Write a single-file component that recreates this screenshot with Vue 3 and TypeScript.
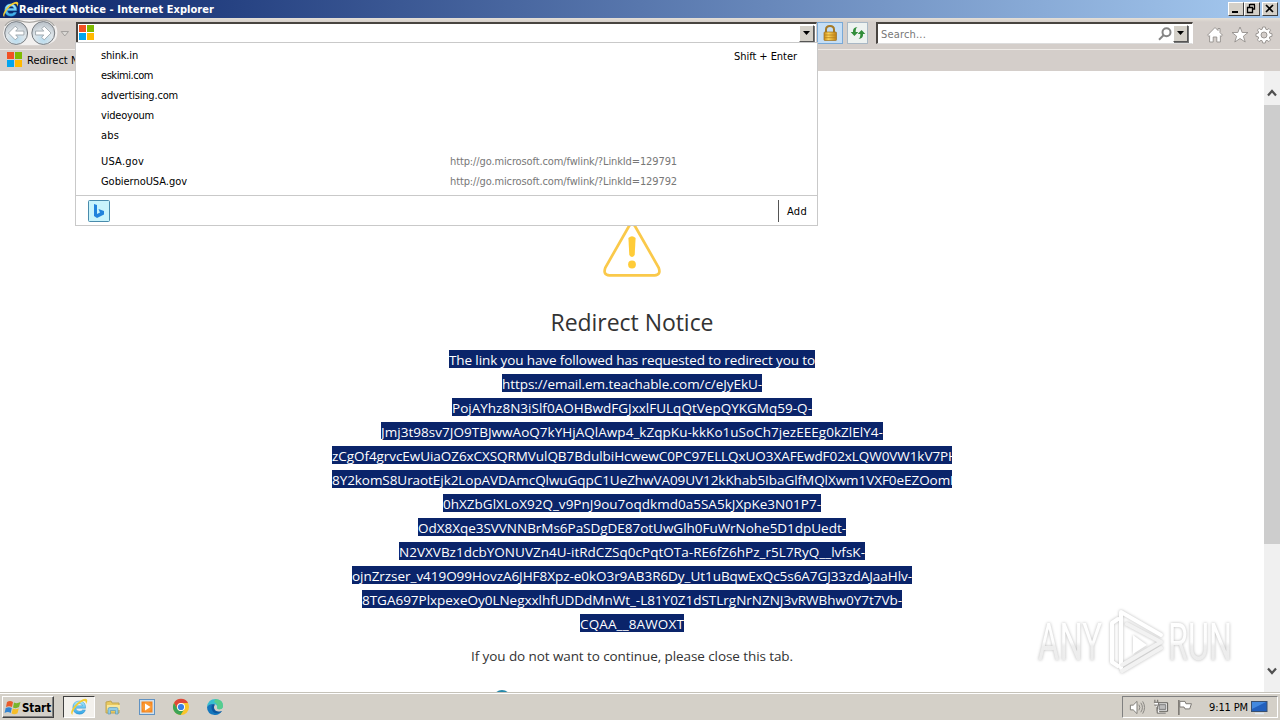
<script setup lang="ts">
import type { Directive } from 'vue'

interface Line { text: string; width: number }
interface Suggestion { name: string; width: number; url?: string; gap?: boolean }

// Spreads letters so that a text fills the given width in pixels.
const vFit: Directive<HTMLElement, number> = {
  mounted(el, { value }) {
    const count = (el.textContent ?? '').length
    el.style.letterSpacing = `${(value - el.getBoundingClientRect().width) / count}px`
  },
}

const suggestions: Suggestion[] = [
  { name: 'shink.in', width: 37 },
  { name: 'eskimi.com', width: 52 },
  { name: 'advertising.com', width: 77 },
  { name: 'videoyoum', width: 53 },
  { name: 'abs', width: 18 },
  { name: 'USA.gov', width: 43, url: 'http://go.microsoft.com/fwlink/?LinkId=129791', gap: true },
  { name: 'GobiernoUSA.gov', width: 86, url: 'http://go.microsoft.com/fwlink/?LinkId=129792' },
]

const lines: Line[] = [
  { text: 'The link you have followed has requested to redirect you to', width: 366 },
  { text: 'https://email.em.teachable.com/c/eJyEkU-', width: 260 },
  { text: 'PojAYhz8N3iSlf0AOHBwdFGJxxlFULqQtVepQYKGMq59-Q-', width: 360 },
  { text: 'Jmj3t98sv7JO9TBJwwAoQ7kYHjAQlAwp4_kZqpKu-kkKo1uSoCh7jezEEEg0kZlElY4-', width: 502 },
  { text: 'zCgOf4grvcEwUiaOZ6xCXSQRMVulQB7BdulbiHcwewC0PC97ELLQxUO3XAFEwdF02xLQW0VW1kV7PH', width: 626 },
  { text: '8Y2komS8UraotEjk2LopAVDAmcQlwuGqpC1UeZhwVA09UV12kKhab5IbaGlfMQlXwm1VXF0eEZOomH', width: 628 },
  { text: '0hXZbGlXLoX92Q_v9PnJ9ou7oqdkmd0a5SA5kJXpKe3N01P7-', width: 378 },
  { text: 'OdX8Xqe3SVVNNBrMs6PaSDgDE87otUwGlh0FuWrNohe5D1dpUedt-', width: 428 },
  { text: 'N2VXVBz1dcbYONUVZn4U-itRdCZSq0cPqtOTa-RE6fZ6hPz_r5L7RyQ__lvfsK-', width: 466 },
  { text: 'ojnZrzser_v419O99HovzA6JHF8Xpz-e0kO3r9AB3R6Dy_Ut1uBqwExQc5s6A7GJ33zdAJaaHlv-', width: 560 },
  { text: '8TGA697PlxpexeOy0LNegxxlhfUDDdMnWt_-L81Y0Z1dSTLrgNrNZNJ3vRWBhw0Y7t7Vb-', width: 540 },
  { text: 'CQAA__8AWOXT', width: 104 },
]
</script>

<template>
  <div class="screen">
    <svg class="defs" aria-hidden="true">
      <defs>
        <linearGradient id="blueE" x1="0" y1="0" x2="0" y2="1">
          <stop offset="0" stop-color="#a8ecff" /><stop offset="1" stop-color="#2fa4e6" />
        </linearGradient>
        <radialGradient id="round" cx=".5" cy=".8" r=".7">
          <stop offset="0" stop-color="#b9dcef" /><stop offset=".6" stop-color="#dfe6ea" /><stop offset="1" stop-color="#bfc7ce" />
        </radialGradient>
        <linearGradient id="lockBody" x1="0" y1="0" x2="1" y2="0">
          <stop offset="0" stop-color="#c98a16" /><stop offset=".35" stop-color="#fbd45a" /><stop offset="1" stop-color="#c07f10" />
        </linearGradient>
        <linearGradient id="fade" gradientUnits="userSpaceOnUse" x1="0" y1="18" x2="0" y2="58">
          <stop offset="0" stop-color="#fff" /><stop offset=".5" stop-color="#fdfdfd" /><stop offset=".6" stop-color="#eee" /><stop offset="1" stop-color="#ececec" />
        </linearGradient>
        <symbol id="ie" viewBox="0 0 18 18">
          <path fill-rule="evenodd" d="M15.6 10.2H5.8Q6 13.3 9.6 13.3Q11.8 13.3 12.5 11.9H15.4Q14 16.2 9.4 16.2Q3 15.8 2.8 9.5Q3 3.2 9.3 3Q16 3.4 15.6 10.2ZM5.9 7.8H12.5Q12.1 5.5 9.2 5.5Q6.4 5.6 5.9 7.8Z" fill="url(#blueE)" stroke="#1f7fc0" stroke-width=".4" />
          <path d="M2.6 17Q-1.2 15.2 4.8 7.6Q12.6-.5 16.4 1.1Q18.4 2.3 15.9 6.2Q16.5 2.3 13.2 3.2Q8.7 4.8 4.6 10.7Q1.8 15.1 2.6 17Z" fill="#f5cd31" />
        </symbol>
        <symbol id="ms" viewBox="0 0 15 15">
          <path d="M0 0H7V7H0Z" fill="#f25022" /><path d="M8 0H15V7H8Z" fill="#7fba00" />
          <path d="M0 8H7V15H0Z" fill="#00a4ef" /><path d="M8 8H15V15H8Z" fill="#ffb900" />
        </symbol>
      </defs>
    </svg>

    <header class="titlebar">
      <svg class="title-icon"><use href="#ie" /></svg>
      <span class="title"><span v-fit="195">Redirect Notice - Internet Explorer</span></span>
      <div class="controls">
        <span class="win"><svg viewBox="0 0 13 11"><path d="M3 9H9" stroke="#000" stroke-width="2" /></svg></span>
        <span class="win"><svg viewBox="0 0 13 11"><path d="M5 1.5H10M4.5 1V4M9.5 2V6H8M2 4.5H8M2.5 4V9.5H7.5V4" fill="none" stroke="#000" stroke-width="1.3" /></svg></span>
        <span class="win last"><svg viewBox="0 0 13 11"><path d="M3 2L10 9M10 2L3 9" stroke="#000" stroke-width="1.7" /></svg></span>
      </div>
    </header>

    <nav class="navbar">
      <svg class="travel" viewBox="0 0 74 32">
        <path d="M14 2H45Q58 4 58 15Q58 27 43 28H15Q2 26 2 15Q3 3 14 2Z" fill="#fff" opacity=".7" />
        <path d="M4 8Q10 0 20 3Q29 6 38 3Q49 0 55 8" fill="none" stroke="#aaa8a4" stroke-width="1.3" />
        <g fill="url(#round)" stroke="#74797e"><circle cx="15.5" cy="15.5" r="11.8" /><circle cx="43.5" cy="15.5" r="11.8" /></g>
        <g fill="#fff" stroke="#8f999f" stroke-width=".8">
          <path d="M7.5 15.5L14.5 8.5L17.3 11L15 13.5H23.5V17.5H15L17.3 20L14.5 22.5Z" />
          <path d="M51.5 15.5L44.5 8.5L41.7 11L44 13.5H35.5V17.5H44L41.7 20L44.5 22.5Z" />
        </g>
        <path d="M62 14H69.5L65.7 18.5Z" fill="#dedcd8" stroke="#999794" stroke-width=".9" />
      </svg>
      <div class="address">
        <svg class="site-icon"><use href="#ms" /></svg>
        <span class="drop"><svg viewBox="0 0 9 5"><path d="M1 0H8L4.5 4Z" /></svg></span>
      </div>
      <span class="tool lock">
        <svg viewBox="0 0 16 18"><path d="M4 9V5.5Q4 2 8 2Q12 2 12 5.5V9" fill="none" stroke="#a57a27" stroke-width="2" /><rect x="2" y="8" width="12.5" height="8.5" rx=".8" fill="url(#lockBody)" stroke="#9c7021" stroke-width=".7" /><path d="M2 11H14M2 13.7H14" stroke="#b68220" stroke-width=".8" /></svg>
      </span>
      <span class="tool refresh">
        <svg viewBox="0 0 16 16"><path d="M7.5 2Q5.5 3 5.7 7H8.3L4.4 11L.7 7H3Q2.5 2.5 7.5 2Z" fill="#318d3a" /><path d="M8.5 14Q10.5 13 10.3 9H7.7L11.6 5L15.3 9H13Q13.5 13.5 8.5 14Z" fill="#318d3a" /></svg>
      </span>
      <div class="search">
        <span class="hint"><span v-fit="45">Search...</span></span>
        <svg class="glass" viewBox="0 0 14 14"><circle cx="8.5" cy="5.3" r="4" /><path d="M5.5 8.2L1 12.8" /></svg>
        <span class="drop"><svg viewBox="0 0 9 5"><path d="M1 0H8L4.5 4Z" /></svg></span>
      </div>
      <div class="commands">
        <svg viewBox="0 0 18 18"><path d="M9 1.5L1.5 9.2L3 10.3L3.6 9.7V16H7.2V11H10.8V16H14.4V9.7L15 10.3L16.5 9.2L14 6.6V2.5H12V4.5Z" /></svg>
        <svg viewBox="0 0 18 18"><path d="M9 1L11.2 6.5H17L12.4 10.2L14.2 16L9 12.5L3.8 16L5.6 10.2L1 6.5H6.8Z" /></svg>
        <svg viewBox="0 0 18 18"><path fill-rule="evenodd" d="M7.7 1H10.3L10.8 3.2L12.1 3.8L14 2.5L15.6 4.1L14.3 6L14.8 7.2L17 7.7V10.3L14.8 10.8L14.3 12L15.6 13.9L13.9 15.6L12 14.3L10.8 14.8L10.3 17H7.7L7.2 14.8L6 14.3L4.1 15.6L2.4 13.9L3.7 12L3.2 10.8L1 10.3V7.7L3.2 7.2L3.7 6L2.4 4.1L4.1 2.4L6 3.7L7.2 3.2ZM9 6A3 3 0 1 0 9 12A3 3 0 1 0 9 6Z" /></svg>
      </div>
    </nav>

    <div class="tabs"><svg><use href="#ms" /></svg><span>Redirect Notice</span></div>

    <section class="viewport">
      <main class="page">
        <svg class="warning" viewBox="0 0 64 60">
          <path d="M28.8 6.5Q32 1.5 35.2 6.5L58.6 47.5Q61.4 54.8 54.6 55.3H9.4Q2.6 54.8 5.4 47.5Z" fill="none" stroke="#fac94a" stroke-width="2.7" />
          <path d="M28.4 18Q32 14.5 35.6 18L34.7 35Q32 39 29.3 35Z" fill="#ffcc38" /><circle cx="32" cy="44.5" r="3.9" fill="#ffcc38" />
        </svg>
        <h1><span v-fit="163">Redirect Notice</span></h1>
        <div class="message">
          <p v-for="line in lines" :key="line.text" :class="{ wide: line.width > 620 }"><span v-fit="line.width">{{ line.text }}</span></p>
        </div>
        <p class="note"><span v-fit="322">If you do not want to continue, please close this tab.</span></p>
        <i class="arc"></i>
      </main>
      <aside class="scrollbar">
        <svg viewBox="0 0 16 34"><path d="M4 24.5L8 20L12 24.5" /></svg>
        <div class="thumb"></div>
        <svg class="down" viewBox="0 0 16 34"><path d="M4 10.5L8 15L12 10.5" /></svg>
      </aside>
    </section>

    <footer class="taskbar">
      <button class="start">
        <svg viewBox="0 0 18 17"><path d="M3 3Q6 1 9 3L8 8Q5 6.5 2 8Z" fill="#e95b2b" /><path d="M10 3.5Q13 5 16.5 3L15 8Q12 10 9 8.5Z" fill="#78b52d" /><path d="M1.7 9Q5 7.5 7.8 9L6.7 14Q3.8 12 .6 14Z" fill="#3384d2" /><path d="M8.8 9.5Q12 11 14.8 9.3L13.5 14.3Q10.5 16 7.6 14.5Z" fill="#f6bd27" /></svg>
        <span v-fit="29">Start</span>
      </button>
      <span class="task active"><svg><use href="#ie" /></svg></span>
      <span class="task"><svg viewBox="0 0 18 18"><path d="M2 4L7 3L8 5H15V15H2Z" fill="#e9c95e" stroke="#bfa553" /><path d="M3 7H16V12H3Z" fill="#f9e79b" /><path d="M4 16V11Q4 9.5 6 9.5H12.5Q14 9.5 14 11V16H11.5V12.5H6.5V16Z" fill="#91cce5" stroke="#5f9bb9" stroke-width=".7" /></svg></span>
      <span class="task"><svg viewBox="0 0 18 18"><rect x="1.5" y="1.5" width="15" height="15" fill="#cfe0ee" stroke="#6092c2" /><rect x="3.5" y="3.5" width="11" height="11" fill="#f5861f" /><circle cx="9" cy="9" r="5" fill="#fa9833" /><path d="M7 5.5L12.5 9L7 12.5Z" fill="#fff" /></svg></span>
      <span class="task"><svg viewBox="0 0 18 18"><circle cx="9" cy="9" r="8" fill="#fac52b" /><path d="M2 5A8 8 0 0 1 16 5H9A4 4 0 0 0 5.5 11Z" fill="#df473a" /><path d="M2 5A8 8 0 0 0 8.5 17L12.5 11A4 4 0 0 1 5.5 11Z" fill="#3ca457" /><circle cx="9" cy="9" r="4" fill="#fff" /><circle cx="9" cy="9" r="3.1" fill="#397fe6" /></svg></span>
      <span class="task"><svg viewBox="0 0 18 18"><path d="M1 9Q2 1 9.5 1Q17 1.5 17 8Q16.5 12 12 11Q10.5 10.5 11.3 9Q11 6 7 6Q3 6 1 9Z" fill="#38bfd0" /><path d="M9.5 1Q17 1.5 17 8Q16.5 12 12 11Q10.5 10.5 11.3 9Q12 6 8 4Z" fill="#57cd8d" /><path d="M1 9Q3 5.5 7 6Q4.5 12 10 14Q13 15 16 13Q13 17.5 8.5 17Q1 16 1 9Z" fill="#1577bd" /><path d="M7 6Q4.5 8 6 12Q8 16 12 15Q15 15 16 13Q9.5 15 8 10Q7.7 8 9 6.5Z" fill="#0b579f" /></svg></span>
      <div class="tray">
        <svg class="speaker" viewBox="0 0 18 18"><path d="M2 6.5H5L9 2.5V15.5L5 11.5H2Z" fill="#fff" stroke="#7b7974" /><path d="M11 6Q13 9 11 12M13 4Q16.5 9 13 14M15 2.5Q19 9 15 15.5" fill="none" stroke="#868480" /></svg>
        <svg class="network" viewBox="0 0 18 18"><path d="M5 4H16V13H5Z" fill="#eee" stroke="#55534f" /><path d="M7 6H14V11H7ZM8 15H14" fill="#bbb" stroke="#777" /><path d="M1.5 3.5H6.5V7L5 8.5V15H8M2.5 3V.8M5.5 3V.8M2 6.5H6" fill="#fff" stroke="#65625e" /></svg>
        <svg class="flag" viewBox="0 0 18 18"><path d="M2.5 1V17" stroke="#77746f" stroke-width="1.6" /><path d="M3.5 2.5H9L10 5H15.8L14 10.5H9L8 8.5H3.5Z" fill="#fff" stroke="#77746f" /></svg>
        <span class="clock"><span v-fit="39">9:11 PM</span></span>
        <svg class="desktop" viewBox="0 0 17 14"><rect x=".5" y=".5" width="15.5" height="10" fill="#2260bd" stroke="#39506f" /><path d="M1 1H15L1 8Z" fill="#4389df" /><path d="M4 12.5H13" stroke="#dce8f5" stroke-width="1.5" /></svg>
      </div>
    </footer>

    <div class="dropdown">
      <div class="list">
        <div v-for="s in suggestions" :key="s.name" class="row" :class="{ gap: s.gap }">
          <span class="name"><span v-fit="s.width">{{ s.name }}</span></span>
          <span v-if="s.url" class="url"><span v-fit="227">{{ s.url }}</span></span>
          <span v-if="s.name === 'shink.in'" class="keys"><span v-fit="63">Shift + Enter</span></span>
        </div>
      </div>
      <div class="actions">
        <svg viewBox="0 0 22 22"><rect x=".5" y=".5" width="21" height="21" rx="1" fill="#c8f4fc" stroke="#498bac" /><path d="M6 4L9 5V14L12 12.5L10.5 9L16 11V14.5L9 18L6 16Z" fill="#2183dc" /></svg>
        <span class="add"><span v-fit="20">Add</span></span>
      </div>
    </div>

    <svg class="watermark" viewBox="0 0 210 80">
      <g class="mark-text"><text x="8" y="56" textLength="64" lengthAdjust="spacingAndGlyphs">ANY</text><text x="138" y="56" textLength="64" lengthAdjust="spacingAndGlyphs">RUN</text></g>
      <g class="mark-shape"><path d="M88 15L82 19V58L88 62" /><path d="M103 31V50L117 41Z" class="core" /><path d="M91 64V8L131 31" /><path d="M97 20L131 38L92 61M131 44L92 67" class="low" /></g>
    </svg>
  </div>
</template>

<style>
html, body { overflow: hidden; }
</style>

<style scoped>
* { box-sizing: border-box; }
.screen { position: relative; width: 1280px; height: 720px; display: flex; flex-direction: column; overflow: hidden; background: #fff; color: #000; font: 11px/16px "DejaVu Sans Condensed", "DejaVu Sans", sans-serif; white-space: nowrap; }
.screen svg { display: block; flex: none; }
.screen .defs { position: absolute; width: 0; height: 0; }
.titlebar { height: 18px; flex: none; display: flex; align-items: center; padding: 0 2px; color: #fff; background: linear-gradient(90deg, #0a246a, #a6caf0); }
.title-icon { width: 17px; height: 17px; }
.title { flex: 1; font-weight: bold; padding-top: 1px; }
.controls { display: flex; }
.win { width: 16px; height: 14px; background: #d4d0c8; border: 1px solid; border-color: #fff #404040 #404040 #fff; }
.win svg { width: 13px; height: 11px; }
.win.last { margin-left: 2px; }
.navbar { height: 31px; flex: none; display: flex; background: linear-gradient(#e4dfd7 0, #d4ceca 4px); }
.travel { width: 74px; height: 31px; }
.address, .search { height: 22px; display: flex; align-items: center; background: #fff; border: 1px solid #808080; border-top: 2px solid #484440; border-left: 2px solid #484440; border-bottom: 1px solid #ddd; }
.address { width: 741px; margin: 4px 0 0 2px; padding-right: 2px; border-right-color: #d4ceca; }
.site-icon { width: 15px; height: 15px; margin: -2px 0 0 1px; }
.drop { width: 15px; height: 17px; display: grid; place-items: center; background: #d4d0c8; border: 1px solid; border-color: #fff #555 #555 #fff; box-shadow: 1px 1px #777; }
.drop svg { width: 9px; height: 5px; }
.address .drop { margin: -1px 0 0 auto; }
.tool { height: 22px; margin-top: 4px; display: grid; place-items: center; border: 1px solid #79a9d7; background: #c5def5; }
.lock { width: 26px; }
.lock svg { width: 16px; height: 18px; }
.refresh { width: 21px; margin-left: 4px; background: #edf2f0; border-color: #a9b8c5; }
.refresh svg { width: 16px; height: 16px; }
.search { width: 317px; margin: 4px 0 0 8px; padding-left: 3px; border-right-color: #fff; }
.hint { color: #777; flex: 1; padding-top: 2px; }
.glass { width: 14px; height: 14px; margin-right: 1px; fill: none; stroke: #858585; stroke-width: 2; }
.search .drop { margin: -1px 4px 0 0; }
.commands { display: flex; gap: 6.5px; padding: 8px 0 0 13px; }
.commands svg { width: 18px; height: 18px; fill: #fff; stroke: #94908c; stroke-width: .9; }
.tabs { height: 22px; flex: none; display: flex; align-items: center; padding-left: 7px; gap: 5px; background: #d4ceca; border-top: 1px solid #eeeae6; }
.tabs svg { width: 15px; height: 15px; margin-top: -2px; }
.tabs span { width: 100px; overflow: hidden; }
.viewport { height: 621px; flex: none; display: flex; }
.page { width: 1264px; display: flex; flex-direction: column; align-items: center; font-family: "Open Sans", "Noto Sans", sans-serif; color: #333; overflow: hidden; }
.page > * { flex: none; }
.warning { width: 64px; height: 60px; margin-top: 149px; }
.page h1 { margin: 24px 0 0; font-size: 23px; font-weight: 400; line-height: 36px; }
.page p { margin: 0; }
.message { width: 640px; margin-top: 7px; padding: 0 20px; overflow: hidden; color: #fff; font-size: 13.5px; line-height: 24px; text-align: center; }
.message p { height: 24px; display: flex; justify-content: center; align-items: center; }
.message p.wide { justify-content: flex-start; }
.message span { height: 18px; flex: none; background: #0a246a; line-height: 20px; }
.page .note { margin-top: 9px; font-size: 13.5px; line-height: 24px; }
.arc { width: 18px; height: 18px; margin: 22px 260px 0 0; border: 2px solid #2689aa; border-radius: 50%; }
.scrollbar { width: 16px; background: #f0f0f0; display: flex; flex-direction: column; }
.scrollbar svg { width: 16px; height: 34px; fill: none; stroke: #505050; stroke-width: 2.2; }
.thumb { height: 439px; background: #cdcdcd; }
.scrollbar .down { margin-top: auto; }
.taskbar { height: 28px; flex: none; display: flex; align-items: center; padding: 1px 2px 0; background: #d4d0c8; border-top: 1px solid #c5c2b9; box-shadow: inset 0 1px #fff; }
.start { width: 52px; height: 22px; display: flex; align-items: center; padding: 1px 1px 0; color: #000; background: #d4d0c8; border: 1px solid; border-color: #fff #404040 #404040 #fff; box-shadow: inset -1px -1px #808080; font: bold 11.5px/16px "DejaVu Sans Condensed", "DejaVu Sans", sans-serif; }
.start svg { width: 18px; height: 17px; }
.task { width: 34px; height: 22px; display: grid; place-items: center; }
.task svg { width: 18px; height: 18px; }
.task.active { width: 32px; margin: 0 1px 0 9px; background: #f3f1ed; border: 1px solid; border-color: #404040 #fff #fff #404040; }
.tray { width: 156px; height: 22px; margin-left: auto; display: flex; align-items: center; border: 1px solid; border-color: #808080 #fff #fff #808080; padding-left: 5px; }
.tray .speaker, .tray .network, .tray .flag { width: 18px; height: 17px; margin-right: 6px; }
.clock { width: 51px; padding: 2px 0 0 9px; }
.tray .desktop { width: 17px; height: 14px; margin-top: 2px; }
.dropdown { position: absolute; left: 75px; top: 42px; width: 743px; height: 184px; background: #fff; border: 1px solid #c9c9c9; }
.list { height: 152px; padding-top: 3px; }
.row { height: 20px; display: flex; align-items: center; padding-left: 25px; }
.row.gap { margin-top: 6px; }
.name { width: 349px; }
.url { color: #777; }
.keys { margin: 2px 20px 0 auto; }
.actions { height: 30px; display: flex; align-items: center; justify-content: space-between; border-top: 1px solid #c9c9c9; padding: 0 10px 0 12px; }
.actions svg { width: 22px; height: 22px; }
.add { height: 22px; line-height: 23px; border-left: 1px solid #555; padding-left: 8px; }
.watermark { position: absolute; left: 1030px; top: 604px; width: 210px; height: 80px; filter: drop-shadow(0 0 1.5px #bbb); }
.mark-text { fill: url(#fade); font: 400 51px Roboto, sans-serif; }
.mark-shape { fill: none; stroke: #fff; stroke-width: 4; stroke-linejoin: round; stroke-linecap: round; }
.mark-shape .low { stroke: #f2f2f2; }
.mark-shape .core { fill: #fff; stroke: none; }
</style>
